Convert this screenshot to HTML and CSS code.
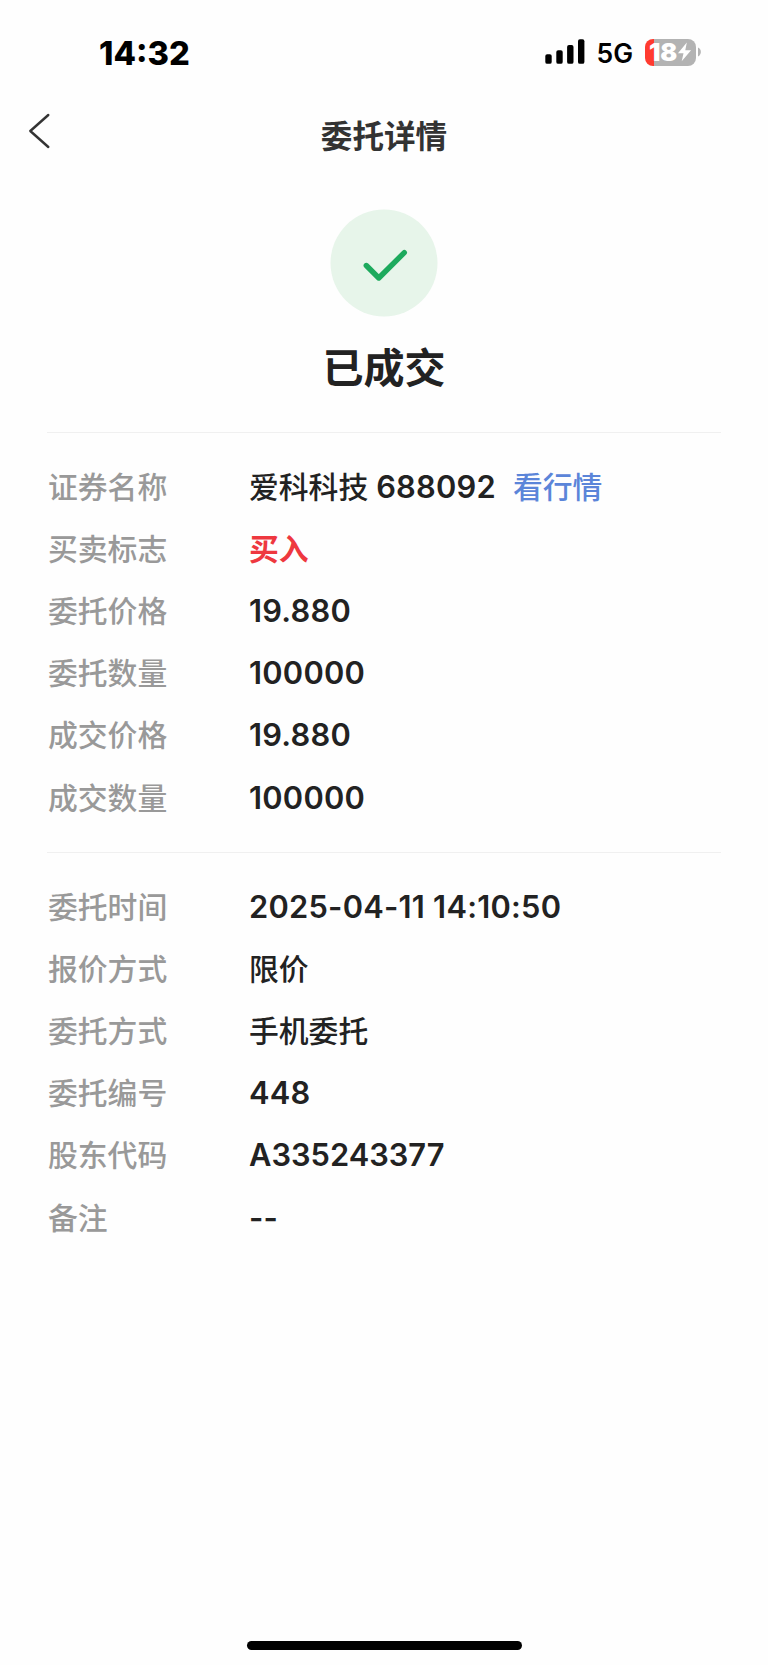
FILE: index.html
```html
<!DOCTYPE html>
<html lang="zh-CN">
<head>
  <meta charset="UTF-8" />
  <meta name="viewport" content="width=device-width, initial-scale=1.0"/>
  <title>委托详情</title>
  <link rel="stylesheet" href="styles.css">
</head>
<body>
  <div class="status-bar">
    <span class="time">14:32</span>
    <div class="status-icons">
      <svg class="signal" width="40" height="26" viewBox="0 0 40 26">
        <rect x="0.3" y="15.2" width="6.4" height="9.6" rx="1.9"/>
        <rect x="11.3" y="11.2" width="6.4" height="13.6" rx="1.9"/>
        <rect x="22.1" y="6" width="6.4" height="18.8" rx="1.9"/>
        <rect x="33" y="0.3" width="6.4" height="24.5" rx="1.9"/>
      </svg>
      <span class="network">5G</span>
      <div class="battery">
        <div class="battery-body">
          <span class="battery-level">18</span>
          <svg class="bolt" width="15" height="20" viewBox="0 0 13 18">
            <path d="M8.6 0.4L0.6 10.2H5.6L4 17.4L12.4 7.4H7.2Z"/>
          </svg>
        </div>
        <svg class="battery-cap" width="4" height="10" viewBox="0 0 4 10">
          <path d="M0 0.6C3.8 1.8 3.8 8.2 0 9.4Z"/>
        </svg>
      </div>
    </div>
  </div>

  <header class="nav">
    <svg class="back" width="24" height="38" viewBox="0 0 24 38">
      <path d="M20.3 3L2.3 19L20.3 35"/>
    </svg>
    <h1>委托详情</h1>
  </header>

  <main class="content">
    <div class="result">
      <svg width="108" height="108" viewBox="0 0 108 108">
        <circle cx="54" cy="54" r="53.5" fill="#e7f5ea"/>
        <path d="M36.3 56.5L48.8 69L74.3 43.6" fill="none" stroke="#1daa5d" stroke-width="5.4" stroke-linecap="round" stroke-linejoin="round"/>
      </svg>
      <h2>已成交</h2>
    </div>

    <div class="list">
      <div class="row"><span class="label">证券名称</span><span class="value">爱科科技 <span class="num">688092</span></span><a class="link">看行情</a></div>
      <div class="row"><span class="label">买卖标志</span><span class="value buy">买入</span></div>
      <div class="row"><span class="label">委托价格</span><span class="value num">19.880</span></div>
      <div class="row"><span class="label">委托数量</span><span class="value num">100000</span></div>
      <div class="row"><span class="label">成交价格</span><span class="value num">19.880</span></div>
      <div class="row"><span class="label">成交数量</span><span class="value num">100000</span></div>
    </div>

    <div class="list">
      <div class="row"><span class="label">委托时间</span><span class="value num">2025-04-11 14:10:50</span></div>
      <div class="row"><span class="label">报价方式</span><span class="value">限价</span></div>
      <div class="row"><span class="label">委托方式</span><span class="value">手机委托</span></div>
      <div class="row"><span class="label">委托编号</span><span class="value num">448</span></div>
      <div class="row"><span class="label">股东代码</span><span class="value num account">A335243377</span></div>
      <div class="row"><span class="label">备注</span><span class="value num">--</span></div>
    </div>
  </main>

  <div class="home-bar"></div>
</body>
</html>
```

FILE: styles.css
```css
* {
  box-sizing: border-box;
}

body {
  margin: 0;
  height: 1665px;
  display: flex;
  flex-direction: column;
  background-color: #fefefe;
  color: #222;
  font-family: Inter, "Noto Sans CJK SC", sans-serif;
}

.status-bar {
  height: 104px;
  padding: 0 66px 0 99px;
  display: flex;
  justify-content: space-between;
  align-items: center;
  color: #000;
}

.time {
  padding-top: 1px;
  font-size: 32.7px;
  font-weight: 800;
}

.status-icons {
  display: flex;
  align-items: center;
}

.network {
  padding-top: 2px;
  margin-left: 11px;
  font-size: 26.5px;
  font-weight: 600;
}

.battery {
  margin-left: 12px;
  display: flex;
  align-items: center;
  gap: 2px;
}

.battery-body {
  width: 51px;
  height: 27px;
  padding-left: 4px;
  border-radius: 8px;
  background: linear-gradient(to right, #ff3b30 9px, #b3b3b3 9px);
  display: flex;
  align-items: center;
  color: #fff;
}

.battery-level {
  font-size: 25px;
  font-weight: 900;
  line-height: 27px;
}

.bolt {
  flex-shrink: 0;
  fill: #fff;
}

.battery-cap {
  fill: #b3b3b3;
}

.nav {
  height: 64px;
  padding: 0 28px;
  display: grid;
  grid-template-columns: 24px 1fr 24px;
  align-items: center;
}

.back {
  margin-bottom: 11px;
  fill: none;
  stroke: #333;
  stroke-width: 2.4;
  stroke-linecap: round;
  stroke-linejoin: round;
}

h1 {
  margin: 0;
  padding-top: 1px;
  text-align: center;
  font-size: 31.6px;
  font-weight: 700;
  line-height: 64px;
  color: #333;
}

.content {
  flex: 1;
  padding: 0 47px;
}

.result {
  height: 264px;
  padding-top: 41px;
  display: flex;
  flex-direction: column;
  align-items: center;
}

h2 {
  margin: 21px 0 0;
  font-size: 41px;
  font-weight: 700;
  line-height: 60px;
}

.list {
  height: 420px;
  padding: 23px 0 0 1px;
  border-top: 1px solid #f0f0f0;
}

.row {
  height: 62.1px;
  display: flex;
  align-items: center;
  font-size: 29.8px;
  line-height: 62px;
}

.label {
  width: 201px;
  font-weight: 500;
  color: #999;
}

.value {
  font-weight: 500;
}

.num {
  font-size: 30.8px;
  font-weight: 600;
  letter-spacing: 0.25px;
}

.account {
  letter-spacing: 0;
}

.buy {
  font-weight: 700;
  color: #ee383f;
}

.link {
  margin-left: 17px;
  font-weight: 500;
  color: #5b85d9;
}

.home-bar {
  width: 275px;
  height: 9px;
  margin: 0 auto 15px;
  border-radius: 5px;
  background-color: #000;
}
```
